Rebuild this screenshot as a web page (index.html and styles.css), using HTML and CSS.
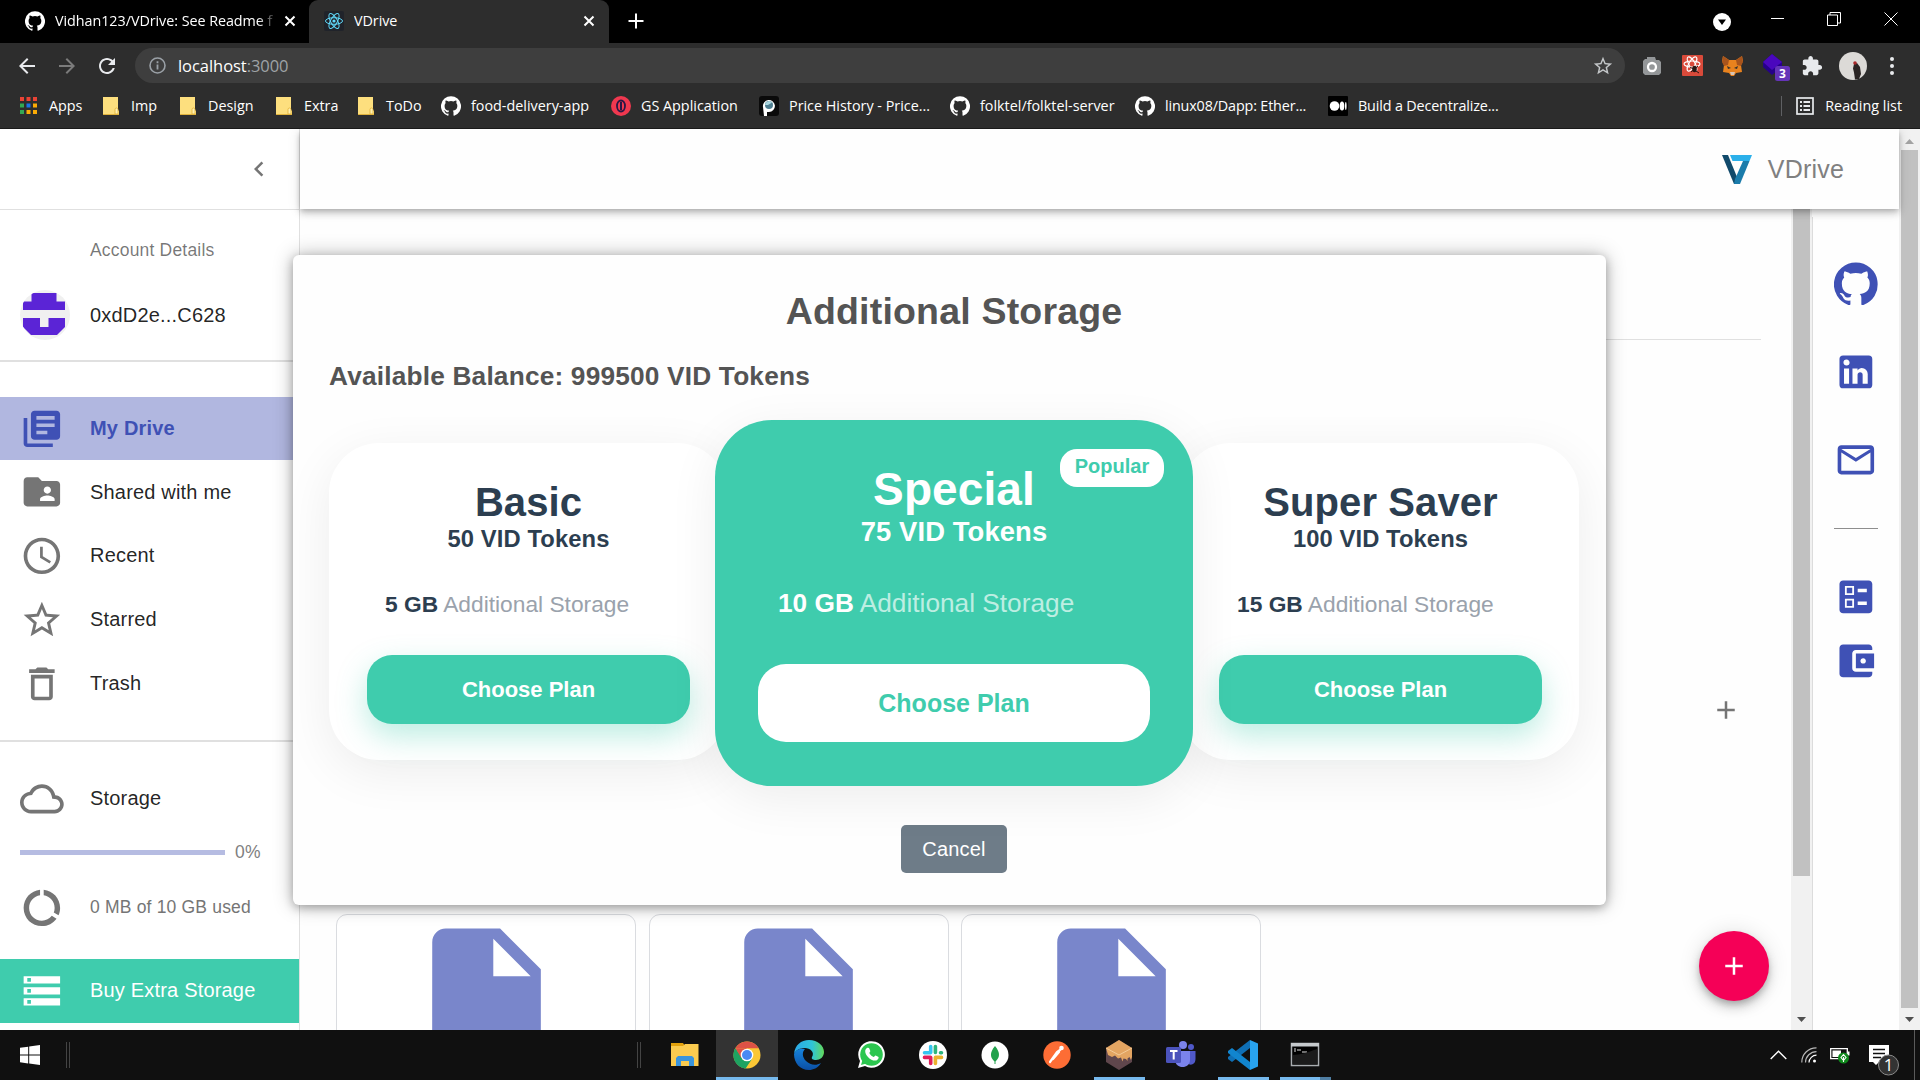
FILE: index.html
```html
<!DOCTYPE html>
<html lang="en">
<head>
<meta charset="utf-8">
<title>VDrive</title>
<link rel="stylesheet" href="styles.css">
</head>
<body>
<svg class="defs" width="0" height="0" aria-hidden="true">
  <symbol id="github" viewBox="0 0 24 24"><path d="M12 .3a12 12 0 0 0-3.8 23.4c.6.1.8-.3.8-.6v-2c-3.3.7-4-1.6-4-1.6-.6-1.4-1.4-1.8-1.4-1.8-1-.7.1-.7.1-.7 1.2 0 1.9 1.2 1.9 1.2 1 1.8 2.8 1.3 3.5 1 0-.8.4-1.3.7-1.6-2.7-.3-5.5-1.3-5.5-6 0-1.2.5-2.3 1.3-3.1-.2-.4-.6-1.6 0-3.2 0 0 1-.3 3.4 1.2a11.5 11.5 0 0 1 6 0c2.3-1.5 3.3-1.2 3.3-1.2.6 1.6.2 2.8 0 3.2.9.8 1.3 1.9 1.3 3.2 0 4.6-2.8 5.6-5.5 5.9.5.4.9 1 .9 2.2v3.3c0 .3.1.7.8.6A12 12 0 0 0 12 .3"/></symbol>
  <symbol id="folder" viewBox="0 0 16 18"><path d="M0 0h15v13l1 1v4H0z" fill="#fddf7e"/><path d="M12 17v-4.500a1.500 1.500 0 0 1 3 0V17z" fill="#fff0b0" stroke="#dfae35" stroke-width=".8"/><path d="M0 17.500h16" stroke="#e0b23c"/></symbol>
  <symbol id="close" viewBox="0 0 12 12"><path d="M1.500 1.500l9 9M10.500 1.500l-9 9" stroke="#fff" stroke-width="2" fill="none"/></symbol>
  <symbol id="add" viewBox="0 0 24 24"><path d="M19 13h-6v6h-2v-6H5v-2h6V5h2v6h6v2z"/></symbol>
  <symbol id="file" viewBox="0 0 24 24"><path d="M6 2c-1.100 0-1.990.9-1.990 2L4 20c0 1.100.89 2 1.990 2H18c1.100 0 2-.9 2-2V8l-6-6H6zm7 7V3.500L18.500 9H13z"/></symbol>
</svg>

<header class="browser">
  <div class="tabs">
    <div class="tab tab-first">
      <svg class="fav" fill="#fff"><use href="#github"/></svg>
      <span class="tab-title tab-fade">Vidhan123/VDrive: See Readme f</span>
      <svg class="tab-x"><use href="#close"/></svg>
    </div>
    <div class="tab tab-active">
      <svg class="fav" viewBox="0 0 20 20"><rect width="20" height="20" rx="2" fill="#20232a"/><g fill="none" stroke="#61dafb" stroke-width="1"><ellipse cx="10" cy="10" rx="8.500" ry="3.300"/><ellipse cx="10" cy="10" rx="8.500" ry="3.300" transform="rotate(60 10 10)"/><ellipse cx="10" cy="10" rx="8.500" ry="3.300" transform="rotate(120 10 10)"/></g><circle cx="10" cy="10" r="1.600" fill="#61dafb"/></svg>
      <span class="tab-title">VDrive</span>
      <svg class="tab-x"><use href="#close"/></svg>
    </div>
    <svg class="new-tab" viewBox="0 0 16 16"><path d="M8 .5v15M.5 8h15" stroke="#fff" stroke-width="2"/></svg>
    <div class="window-buttons">
      <svg width="18" height="18" viewBox="0 0 18 18"><circle cx="9" cy="9" r="9" fill="#fff"/><path d="M5 6.500h8L9 12z" fill="#000"/></svg>
      <svg width="14" height="14" viewBox="0 0 14 14" class="wb"><path d="M0 6.500h13"/></svg>
      <svg width="14" height="14" viewBox="0 0 14 14" class="wb"><path d="M.5 3h10v10.500H.5zM3 3V.5h10.500v10.500h-3"/></svg>
      <svg width="14" height="14" viewBox="0 0 14 14" class="wb"><path d="M.5.5l13 13M13.500.5l-13 13"/></svg>
    </div>
  </div>
  <div class="toolbar">
    <svg class="nav" viewBox="0 0 24 24" fill="#e8eaed"><path d="M20 11H7.830l5.590-5.590L12 4l-8 8 8 8 1.410-1.410L7.830 13H20v-2z"/></svg>
    <svg class="nav" viewBox="0 0 24 24" fill="#7b7b7b"><path d="M12 4l-1.410 1.410L16.170 11H4v2h12.170l-5.580 5.590L12 20l8-8z"/></svg>
    <svg class="nav" viewBox="0 0 24 24" fill="#e8eaed"><path d="M17.650 6.350C16.200 4.900 14.210 4 12 4c-4.420 0-7.990 3.580-7.990 8s3.570 8 7.990 8c3.730 0 6.840-2.550 7.730-6h-2.080c-.82 2.330-3.040 4-5.650 4-3.310 0-6-2.690-6-6s2.690-6 6-6c1.660 0 3.140.69 4.220 1.780L13 11h7V4l-2.350 2.350z"/></svg>
    <div class="omnibox">
      <svg width="17" height="17" viewBox="0 0 17 17"><circle cx="8.500" cy="8.500" r="7.500" fill="none" stroke="#9aa0a6" stroke-width="1.600"/><path d="M8.500 7.500v5M8.500 4.200v2" stroke="#9aa0a6" stroke-width="1.800"/></svg>
      <span class="url">localhost<span class="port">:3000</span></span>
      <svg class="star" width="22" height="22" viewBox="0 0 24 24" fill="#c4c7c9"><path d="M22 9.240l-7.190-.62L12 2 9.190 8.630 2 9.240l5.460 4.730L5.820 21 12 17.270 18.180 21l-1.630-7.030L22 9.240zM12 15.400l-3.760 2.270 1-4.280-3.320-2.880 4.380-.38L12 6.100l1.710 4.040 4.380.38-3.320 2.880 1 4.280L12 15.400z"/></svg>
    </div>
    <div class="extensions">
      <svg width="20" height="20" viewBox="0 0 20 20"><path d="M3 3h2V1h8l1 3h3l2 2v11l-2 2H3l-2-2V5z" fill="#949799"/><circle cx="10" cy="11" r="4" fill="none" stroke="#fff" stroke-width="2.300"/></svg>
      <svg width="21" height="21" viewBox="0 0 21 21"><rect width="21" height="21" rx="1" fill="#d94a3a"/><g fill="none" stroke="#fff" stroke-width="1.100"><ellipse cx="10" cy="9" rx="8" ry="3"/><ellipse cx="10" cy="9" rx="8" ry="3" transform="rotate(60 10 9)"/><ellipse cx="10" cy="9" rx="8" ry="3" transform="rotate(120 10 9)"/></g><ellipse cx="12.500" cy="14" rx="2.300" ry="3.300" fill="#261613"/><path d="M8 12l9 6M9 17l7-6" stroke="#261613" stroke-width="1"/></svg>
      <svg width="21" height="20" viewBox="0 0 21 20"><path d="M1 0l6 4h7l6-4 1 5-2 4 1 7-6 1-2 3H9l-2-3-6-1 1-7-2-4z" fill="#e8821e"/><path d="M1 0l6 4-1 5-4 1-2-4zM20 0l-6 4 1 5 4 1 2-4z" fill="#a8541c"/><path d="M8 16h5l-1 3H9z" fill="#d8c5b5"/><path d="M5 10l4 2-3 1zM16 10l-4 2 3 1z" fill="#34302f"/></svg>
      <svg width="30" height="28" viewBox="0 0 30 28"><path d="M2 8L11 0l10 8v5l-10 8-9-8z" fill="#26008a"/><path d="M2 8l9-8 10 8-10 8z" fill="#4a07bd"/><rect x="14" y="12" width="15" height="15" rx="2.500" fill="#6534b8"/><text x="21.500" y="24" class="ext-count">3</text></svg>
      <svg width="22" height="22" viewBox="0 0 24 24" fill="#e8eaed"><path d="M20.500 11H19V7c0-1.100-.9-2-2-2h-4V3.500C13 2.120 11.880 1 10.500 1S8 2.120 8 3.500V5H4c-1.100 0-1.990.9-1.990 2v3.800H3.500c1.490 0 2.700 1.210 2.700 2.700s-1.210 2.700-2.700 2.700H2V20c0 1.100.9 2 2 2h3.800v-1.500c0-1.490 1.210-2.700 2.700-2.700 1.490 0 2.700 1.210 2.700 2.700V22H17c1.100 0 2-.9 2-2v-4h1.500c1.380 0 2.500-1.120 2.500-2.500S21.880 11 20.500 11z"/></svg>
      <svg width="28" height="28" viewBox="0 0 28 28"><circle cx="14" cy="14" r="14" fill="#dcdad7"/><path d="M15 12l3-1 3 4 1 7-2 5-4 .5-1-7-1-4z" fill="#2a2423"/><circle cx="16" cy="11" r="1.800" fill="#a9282a"/></svg>
      <svg width="4" height="18" viewBox="0 0 4 18" fill="#e8eaed"><circle cx="2" cy="2" r="2"/><circle cx="2" cy="9" r="2"/><circle cx="2" cy="16" r="2"/></svg>
    </div>
  </div>
  <nav class="bookmarks">
    <a class="bm bm-folder"><svg width="17" height="17" viewBox="0 0 17 17"><path d="M0 0h4v4H0zM6.500 0h4v4h-4zM13 0h4v4h-4z" fill="#ea4335"/><path d="M0 6.500h4v4H0zM0 13h4v4H0z" fill="#34a853"/><path d="M6.500 6.500h4v4h-4z" fill="#1a73e8"/><path d="M13 6.500h4v4h-4zM6.500 13h4v4h-4zM13 13h4v4h-4z" fill="#fbab05"/></svg>Apps</a>
    <a class="bm bm-folder"><svg width="16" height="18"><use href="#folder"/></svg>Imp</a>
    <a class="bm bm-folder"><svg width="16" height="18"><use href="#folder"/></svg>Design</a>
    <a class="bm bm-folder"><svg width="16" height="18"><use href="#folder"/></svg>Extra</a>
    <a class="bm bm-folder"><svg width="16" height="18"><use href="#folder"/></svg>ToDo</a>
    <a class="bm"><svg width="20" height="20" fill="#fff"><use href="#github"/></svg>food-delivery-app</a>
    <a class="bm"><svg width="20" height="20" viewBox="0 0 20 20"><circle cx="10" cy="10" r="10" fill="#f0384f"/><ellipse cx="10" cy="10" rx="4" ry="5.500" fill="none" stroke="#2a1745" stroke-width="1.800"/><path d="M10 6v8" stroke="#2a1745" stroke-width="2"/></svg>GS Application</a>
    <a class="bm"><svg width="20" height="20" viewBox="0 0 20 20"><rect width="20" height="20" rx="3" fill="#0a0a0a"/><path d="M5 20l-1-9a6 6 0 1 1 6 5l-2 0 0 4z" fill="#fff"/><circle cx="10" cy="9" r="4" fill="#4e7e90"/><path d="M6 9a4 4 0 0 1 7-2.500L9 9z" fill="#a9d6df"/></svg>Price History - Price...</a>
    <a class="bm"><svg width="20" height="20" fill="#fff"><use href="#github"/></svg>folktel/folktel-server</a>
    <a class="bm bm-tight"><svg width="20" height="20" fill="#fff"><use href="#github"/></svg>linux08/Dapp: Ether...</a>
    <a class="bm bm-tight"><svg width="20" height="20" viewBox="0 0 20 20"><rect width="20" height="20" rx="1" fill="#000"/><g fill="#fff"><circle cx="6.500" cy="10" r="4.800"/><ellipse cx="14" cy="10" rx="2.300" ry="4.500"/><ellipse cx="17.800" cy="10" rx=".8" ry="4"/></g></svg>Build a Decentralize...</a>
    <a class="reading"><svg width="18" height="18" viewBox="0 0 18 18"><rect x="1" y="1" width="16" height="16" fill="none" stroke="#e8eaed" stroke-width="1.700"/><path d="M4 5h2M7.500 5H14M4 9h2M7.500 9H14M4 13h2M7.500 13H14" stroke="#e8eaed" stroke-width="1.800"/></svg>Reading list</a>
  </nav>
</header>

<main class="page">
  <aside class="drawer">
    <div class="drawer-head">
      <svg width="30" height="30" viewBox="0 0 24 24" fill="#757575"><path d="M15.410 7.410L14 6l-6 6 6 6 1.410-1.410L10.830 12z"/></svg>
    </div>
    <div class="account-label">Account Details</div>
    <div class="account">
      <svg class="avatar" viewBox="0 0 50 50"><defs><clipPath id="round"><circle cx="25" cy="25" r="25"/></clipPath></defs><g clip-path="url(#round)"><rect width="50" height="50" fill="#f0f0f0"/><path d="M11.500 3h25v8.500H45V20H3v-8.500h8.500zM3 28h17v9h8.500v-9H45v9l-8 8H11l-8-8z" fill="#5b24d6"/></g></svg>
      <span>0xdD2e...C628</span>
    </div>
    <div class="menu">
      <a class="item selected"><svg viewBox="0 0 24 24"><path d="M4 6H2v14c0 1.100.9 2 2 2h14v-2H4V6zm16-4H8c-1.100 0-2 .9-2 2v12c0 1.100.9 2 2 2h12c1.100 0 2-.9 2-2V4c0-1.100-.9-2-2-2zm-1 9H9V9h10v2zm-4 4H9v-2h6v2zm4-8H9V5h10v2z"/></svg>My Drive</a>
      <a class="item"><svg viewBox="0 0 24 24"><path d="M20 6h-8l-2-2H4c-1.100 0-1.990.9-1.990 2L2 18c0 1.100.9 2 2 2h16c1.100 0 2-.9 2-2V8c0-1.100-.9-2-2-2zm-5 3c1.100 0 2 .9 2 2s-.9 2-2 2-2-.9-2-2 .9-2 2-2zm4 8h-8v-1c0-1.330 2.670-2 4-2s4 .67 4 2v1z"/></svg>Shared with me</a>
      <a class="item"><svg viewBox="0 0 24 24"><path d="M11.990 2C6.470 2 2 6.480 2 12s4.470 10 9.990 10C17.520 22 22 17.520 22 12S17.520 2 11.990 2zM12 20c-4.420 0-8-3.580-8-8s3.580-8 8-8 8 3.580 8 8-3.580 8-8 8zm.5-13H11v6l5.250 3.150.75-1.230-4.500-2.670z"/></svg>Recent</a>
      <a class="item"><svg viewBox="0 0 24 24"><path d="M22 9.240l-7.190-.62L12 2 9.190 8.630 2 9.240l5.460 4.730L5.820 21 12 17.270 18.180 21l-1.630-7.030L22 9.240zM12 15.400l-3.760 2.270 1-4.280-3.320-2.880 4.380-.38L12 6.100l1.710 4.040 4.380.38-3.320 2.880 1 4.280L12 15.400z"/></svg>Starred</a>
      <a class="item"><svg viewBox="0 0 24 24"><path d="M6 19c0 1.100.9 2 2 2h8c1.100 0 2-.9 2-2V7H6v12zM8 9h8v10H8V9zm7.500-5l-1-1h-5l-1 1H5v2h14V4z"/></svg>Trash</a>
    </div>
    <div class="storage">
      <div class="item"><svg viewBox="0 0 24 24"><path d="M19.350 10.040C18.670 6.590 15.640 4 12 4 9.110 4 6.600 5.640 5.350 8.040 2.340 8.360 0 10.910 0 14c0 3.310 2.690 6 6 6h13c2.760 0 5-2.240 5-5 0-2.640-2.050-4.780-4.650-4.960zM19 18H6c-2.210 0-4-1.790-4-4 0-2.050 1.530-3.760 3.560-3.970l1.070-.11.5-.95C8.080 7.140 9.940 6 12 6c2.620 0 4.880 1.860 5.390 4.430l.3 1.500 1.530.11c1.560.1 2.780 1.410 2.780 2.960 0 1.650-1.350 3-3 3z"/></svg>Storage</div>
      <div class="progress"><div class="bar"></div><span>0%</span></div>
      <div class="item used"><svg viewBox="0 0 24 24"><path d="M13 2.050v3.030c3.390.49 6 3.390 6 6.920 0 .9-.18 1.750-.48 2.540l2.600 1.530c.56-1.240.88-2.620.88-4.070 0-5.180-3.950-9.450-9-9.950zM12 19c-3.870 0-7-3.130-7-7 0-3.530 2.610-6.430 6-6.920V2.050c-5.060.5-9 4.760-9 9.950 0 5.520 4.470 10 9.990 10 3.310 0 6.240-1.610 8.060-4.090l-2.600-1.530C16.170 17.980 14.210 19 12 19z"/></svg>0 MB of 10 GB used</div>
      <a class="item buy"><svg viewBox="0 0 24 24"><path d="M2 20h20v-4H2v4zm2-3h2v2H4v-2zM2 4v4h20V4H2zm4 3H4V5h2v2zm-4 7h20v-4H2v4zm2-3h2v2H4v-2z"/></svg>Buy Extra Storage</a>
    </div>
  </aside>

  <section class="main">
    <div class="appbar">
      <svg width="30" height="29" viewBox="0 0 30 29"><path d="M0 0h6l9 22v7h-3z" fill="#114a6b"/><path d="M8 0h22l-2.500 6H10.500z" fill="#2bb0ea"/><path d="M27.500 6h-6.500L13 24l-1 5h6z" fill="#1b7cab"/></svg>
      <span>VDrive</span>
    </div>
    <div class="below">
      <div class="content">
        <hr class="rule">
        <div class="upload"><svg width="30" height="30" fill="#757575"><use href="#add"/></svg></div>
        <div class="files">
          <div class="file"><svg><use href="#file"/></svg></div>
          <div class="file"><svg><use href="#file"/></svg></div>
          <div class="file"><svg><use href="#file"/></svg></div>
        </div>
      </div>
      <div class="scroll scroll-inner"><div class="thumb"></div><svg width="9" height="5" viewBox="0 0 9 5"><path d="M0 0h9L4.500 5z" fill="#505050"/></svg></div>
      <div class="rail">
        <svg viewBox="0 0 24 24"><use href="#github"/></svg>
        <svg viewBox="0 0 24 24"><path d="M19 3a2 2 0 0 1 2 2v14a2 2 0 0 1-2 2H5a2 2 0 0 1-2-2V5a2 2 0 0 1 2-2h14m-.5 15.500v-5.300a3.260 3.260 0 0 0-3.260-3.260c-.85 0-1.840.52-2.320 1.300v-1.110h-2.790v8.370h2.790v-4.930c0-.77.62-1.400 1.390-1.400a1.400 1.400 0 0 1 1.400 1.400v4.930h2.790M6.880 8.560a1.680 1.680 0 0 0 1.680-1.680c0-.93-.75-1.690-1.680-1.690a1.690 1.690 0 0 0-1.690 1.690c0 .93.76 1.680 1.690 1.680m1.390 9.940v-8.370H5.500v8.370h2.770z"/></svg>
        <svg viewBox="0 0 24 24"><path d="M20 4H4c-1.100 0-1.990.9-1.990 2L2 18c0 1.100.9 2 2 2h16c1.100 0 2-.9 2-2V6c0-1.100-.9-2-2-2zm0 14H4V8l8 5 8-5v10zm-8-7L4 6h16l-8 5z"/></svg>
        <hr>
        <svg viewBox="0 0 24 24"><path fill-rule="evenodd" d="M13 9.500h5v-2h-5v2zm0 7h5v-2h-5v2zm6 4.500H5c-1.100 0-2-.9-2-2V5c0-1.100.9-2 2-2h14c1.100 0 2 .9 2 2v14c0 1.100-.9 2-2 2zM6 11h5V6H6v5zm1-4h3v3H7V7zM6 18h5v-5H6v5zm1-4h3v3H7v-3z"/></svg>
        <svg class="wallet" viewBox="0 0 24 24"><path d="M21 18v1c0 1.100-.9 2-2 2H5c-1.110 0-2-.9-2-2V5c0-1.100.89-2 2-2h14c1.100 0 2 .9 2 2v1h-9c-1.110 0-2 .9-2 2v8c0 1.100.89 2 2 2h9zm-9-2h10V8H12v8zm4-2.500c-.83 0-1.500-.67-1.500-1.500s.67-1.500 1.500-1.500 1.500.67 1.500 1.500-.67 1.500-1.500 1.500z"/></svg>
      </div>
    </div>
  </section>

  <div class="scroll scroll-outer"><svg width="9" height="5" viewBox="0 0 9 5"><path d="M0 5h9L4.500 0z" fill="#a3a3a3"/></svg><div class="thumb"></div><svg width="9" height="5" viewBox="0 0 9 5"><path d="M0 0h9L4.500 5z" fill="#505050"/></svg></div>

  <button class="fab"><svg width="30" height="30" fill="#fff"><use href="#add"/></svg></button>

  <div class="modal">
    <h1>Additional Storage</h1>
    <h2>Available Balance: 999500 VID Tokens</h2>
    <div class="plans">
      <div class="plan">
        <h3>Basic</h3>
        <h4>50 VID Tokens</h4>
        <p><b>5 GB</b> Additional Storage</p>
        <button>Choose Plan</button>
      </div>
      <div class="plan special">
        <span class="popular">Popular</span>
        <h3>Special</h3>
        <h4>75 VID Tokens</h4>
        <p><b>10 GB</b> Additional Storage</p>
        <button>Choose Plan</button>
      </div>
      <div class="plan">
        <h3>Super Saver</h3>
        <h4>100 VID Tokens</h4>
        <p><b>15 GB</b> Additional Storage</p>
        <button>Choose Plan</button>
      </div>
    </div>
    <button class="cancel">Cancel</button>
  </div>
</main>

<footer class="taskbar">
  <div class="start">
    <svg width="20" height="20" viewBox="0 0 20 20" fill="#fff"><path d="M0 2.800L8.200 1.700v7.800H0zM9.200 1.500L20 0v9.500H9.200zM0 10.500h8.200v7.900L0 17.300zM9.200 10.500H20V20L9.200 18.500z"/></svg>
  </div>
  <i class="grip"></i>
  <i class="grip grip-apps"></i>
  <div class="apps">
    <div class="app"><svg viewBox="0 0 30 30"><path d="M1 3h12l2 3H1z" fill="#e2a10c"/><path d="M1 6h12l2-2h13.500v22H1z" fill="#fbcb4f"/><path d="M6 26v-8l2-2h14l2 2v8h-5v-5h-8v5z" fill="#3a94dc"/></svg></div>
    <div class="app app-active"><svg viewBox="0 0 30 30"><circle cx="15" cy="15" r="13.500" fill="#fbc735"/><path d="M3.300 8.300A13.500 13.500 0 0 1 26.700 8.300H15z" fill="#dd5246"/><path d="M3.300 8.300A13.500 13.500 0 0 0 13.500 28.400l6.500-9.500-8 1z" fill="#1ea362"/><path d="M3.300 8.300l5.900 10L15 8.300z" fill="#dd5246"/><path d="M3.300 8.300L9.300 18.500l8 2-3.800 8A13.500 13.500 0 0 1 3.300 8.300z" fill="#1ea362"/><circle cx="15" cy="15" r="6.300" fill="#fff"/><circle cx="15" cy="15" r="5" fill="#4a8af4"/></svg></div>
    <div class="app"><svg viewBox="0 0 30 30"><defs><linearGradient id="edge-a" x1="0" x2="1"><stop offset="0" stop-color="#2aa7e8"/><stop offset=".6" stop-color="#2fc4d8"/><stop offset="1" stop-color="#63d95a"/></linearGradient><linearGradient id="edge-b" x1="0" y1="0" x2="0" y2="1"><stop offset="0" stop-color="#1683dc"/><stop offset="1" stop-color="#0b4fa5"/></linearGradient></defs><path d="M0 14C1 5 7 0 15 0c9 0 15 6 15 12 0 5-4 8-8 8-3 0-5-1-4-3 3-5-2-9-7-9-5 0-9 2-11 6z" fill="url(#edge-a)"/><path d="M0 14c2-5 7-6 11-5-3 3-3 8 1 12 4 4 10 5 15 2-3 5-8 7-12 7C6 30 0 23 0 14z" fill="url(#edge-b)"/></svg></div>
    <div class="app"><svg viewBox="0 0 30 30"><path d="M2 28l2-7a13.300 13.300 0 1 1 5 5z" fill="#fff"/><circle cx="15.500" cy="14.500" r="11.300" fill="#2cc64f"/><path d="M5 25l1.500-5 4 3.500z" fill="#2cc64f"/><path d="M11 8c1-.6 2-.3 2.300.5l1 2.400c.2.700-1.200 1.600-1 2.100 1 2 2.400 3.200 4.300 4 .6.2 1.400-1.600 2-1.400l2.500 1.200c1.400.8-.4 3.200-1.600 3.600-5.200 1.300-11.600-5.200-11.300-9.500.1-1.300.9-2.400 1.800-2.900z" fill="#fff"/></svg></div>
    <div class="app"><svg viewBox="0 0 30 30"><circle cx="15" cy="15" r="14" fill="#fff"/><g stroke-width="3.600" stroke-linecap="round" fill="none"><path d="M12.700 6.500v6M6.500 12.700h6" stroke="#36c5f0"/><path d="M17.400 6.500v6M23.500 12.700h-1" stroke="#2eb67d"/><path d="M17.400 17.500v6M17.500 17.400h6" stroke="#ecb22e"/><path d="M12.700 17.500v6M6.500 17.400h6" stroke="#e01e5a"/></g></svg></div>
    <div class="app"><svg viewBox="0 0 30 30"><circle cx="15" cy="15" r="13.500" fill="#fff"/><path d="M15 6c6 7 4.500 12 .5 15.500V24h-1v-2.500C10.500 18 9 13 15 6z" fill="#21a14c"/></svg></div>
    <div class="app"><svg viewBox="0 0 30 30"><circle cx="15" cy="15" r="13.700" fill="#fd6d35"/><path d="M8 22l7-10 3-2M11 19l6-7" stroke="#fff" stroke-width="2.200" stroke-linecap="round"/><circle cx="19.500" cy="8" r="2.300" fill="#fff"/></svg></div>
    <div class="app app-open"><svg viewBox="0 0 30 30"><path d="M2 8l13-8 13 8v14l-13 8-13-8z" fill="#5f464c"/><path d="M2 8l13-8 13 8v9l-1 3-1.500-3-2 1.500v2.500l-1.500-2-2.500-.5-1 3-1.500-4-3 1-3-3-3 1.500-4-2z" fill="#e3a562"/><path d="M2 8l13 7 13-7" stroke="#f3cb98" fill="none"/></svg></div>
    <div class="app"><svg viewBox="0 0 30 30"><circle cx="17" cy="5" r="4" fill="#7b83eb"/><circle cx="25" cy="7" r="3" fill="#5059c9"/><path d="M20 11h9.500v8c0 6-6 7-8 4z" fill="#5059c9"/><path d="M9 11h15v9c0 9-13 9-14.500 2z" fill="#7b83eb"/><rect x="0" y="7" width="15" height="16" rx="1.500" fill="#4b53bc"/><path d="M4 11h7.500M7.700 11v8.500" stroke="#fff" stroke-width="2"/></svg></div>
    <div class="app app-open"><svg viewBox="0 0 30 30"><path d="M22 0l8 3.500v23L22 30z" fill="#28a3f0"/><path d="M22 0v8L4 22l-4-3v-2z" fill="#0f6fb5"/><path d="M22 30v-8L4 8l-4 3v2z" fill="#1185cf"/></svg></div>
    <div class="app app-open app-multi"><svg viewBox="0 0 30 30"><path d="M1.500 3.500h27v22h-27z" fill="#000" stroke="#a9adb0" stroke-width="1.500"/><path d="M1 3h28v3.500H1z" fill="#c5c9cc"/><path d="M4 9h2M4 11h2M8 9v2M10 9v2M12 12h5" stroke="#ddd" stroke-width="1"/><path d="M3 24V15c6 0 16-3 24-6v15z" fill="#1b1b1b"/></svg></div>
  </div>
  <div class="tray">
    <svg width="17" height="10" viewBox="0 0 17 10"><path d="M.7 9L8.500 1.200 16.300 9" fill="none" stroke="#fff" stroke-width="1.400"/></svg>
    <svg width="16" height="16" viewBox="0 0 16 16" fill="none" stroke="#fff" stroke-width="1.200"><path d="M.8 15.500A14.500 14.500 0 0 1 15.500.8M4.500 15.500A11 11 0 0 1 15.500 4.600" opacity=".7"/><path d="M8 15.500a7.500 7.500 0 0 1 7.500-7.300"/><circle cx="13.500" cy="14" r="1.500" fill="#fff" stroke="none"/></svg>
    <svg width="20" height="18" viewBox="0 0 20 18"><path d="M.7 2.700h16.600v10H.7z" fill="none" stroke="#fff" stroke-width="1.300"/><path d="M2.500 4.500H11v6.500H2.500zM18 5.500h1.500v4H18z" fill="#fff"/><circle cx="13.500" cy="12" r="5.500" fill="#0f8a1c"/><path d="M13.500 8.500l2.500 3-2.500 3-2.500-3zM13.500 11v5" fill="none" stroke="#fff" stroke-width="1.100"/></svg>
    <svg width="31" height="31" viewBox="0 0 31 31"><path d="M0 0h20v17H10l-3 3-3-3H0z" fill="#fff"/><path d="M4 4.500h12M4 8.500h12M4 12.500h8" stroke="#101010" stroke-width="1.300"/><circle cx="19.500" cy="20" r="10" fill="#333" stroke="#8a8a8a"/><text x="19.500" y="25.500" class="note-count">1</text></svg>
  </div>
</footer>
</body>
</html>
```

FILE: styles.css
```css
* { box-sizing: border-box; }
html, body { margin: 0; height: 100%; }
body {
  width: 1920px;
  height: 1080px;
  display: flex;
  flex-direction: column;
  overflow: hidden;
  font-family: "Liberation Sans", Arial, sans-serif;
  font-size: 20px;
  letter-spacing: 0.1875px;
  color: rgba(0, 0, 0, 0.87);
}
.defs { position: absolute; }
svg { display: block; flex: none; }
button { border: 0; padding: 0; font-family: inherit; letter-spacing: inherit; }

/* Browser window */
.browser {
  flex: none;
  height: 129px;
  background: #2d2d2d;
  border-bottom: 1px solid #1a1a1a;
  font-family: "Open Sans", "Noto Sans", sans-serif;
  font-size: 14.35px;
  letter-spacing: 0;
  color: #fff;
}
.tabs { height: 43px; background: #000; display: flex; align-items: stretch; }
.tab { display: flex; align-items: center; gap: 10px; }
.tab-first { width: 309px; padding: 0 13px 2px 25px; }
.tab-active { width: 300px; padding: 0 14px 2px 15px; background: #2d2d2d; border-radius: 9px 9px 0 0; }
.fav { width: 20px; height: 20px; }
.tab-title { flex: 1; white-space: nowrap; overflow: hidden; letter-spacing: -0.05px; }
.tab-fade { -webkit-mask-image: linear-gradient(90deg, #000 203px, transparent 222px); mask-image: linear-gradient(90deg, #000 203px, transparent 222px); }
.tab-x { width: 12px; height: 12px; }
.new-tab { width: 16px; height: 16px; margin: 13px 0 0 19px; }
.window-buttons { margin-left: auto; display: flex; align-items: flex-start; padding: 12px 22px 0 0; }
.window-buttons svg:first-child { margin-top: 1px; }
.window-buttons svg:nth-child(2) { margin-left: 40px; }
.window-buttons svg:nth-child(3) { margin-left: 42px; }
.window-buttons svg:nth-child(4) { margin-left: 43px; }
.wb { fill: none; stroke: #fff; stroke-width: 1; }

.toolbar { height: 45px; padding: 5px 26px 5px 15px; display: flex; align-items: center; }
.nav { width: 24px; height: 24px; margin-right: 16px; }
.omnibox { width: 1490px; height: 35px; padding: 0 11px 0 14px; border-radius: 18px; background: #3e3e3e; display: flex; align-items: center; gap: 12px; }
.url { flex: 1; font-size: 16.5px; letter-spacing: -0.05px; padding-bottom: 1px; }
.port { color: #9fa3a6; }
.extensions { flex: none; display: flex; align-items: center; }
.extensions svg:nth-child(1) { margin-left: 17px; }
.extensions svg:nth-child(2) { margin-left: 20px; }
.extensions svg:nth-child(3) { margin-left: 19px; }
.extensions svg:nth-child(4) { margin: 4px 0 0 18px; }
.extensions svg:nth-child(5) { margin-left: 10px; }
.extensions svg:nth-child(6) { margin-left: 16px; }
.extensions svg:nth-child(7) { margin-left: 23px; }
.ext-count { fill: #fff; font-size: 12px; font-weight: 700; text-anchor: middle; }

.bookmarks { height: 40px; padding: 0 18px 5px 20px; display: grid; grid-template-columns: 83px 77px 96px 82px 83px 170px 148px 191px 185px 193px 1fr auto; align-items: center; }
.bm, .reading { display: flex; align-items: center; gap: 10px; white-space: nowrap; }
.bm-folder { gap: 12px; }
.bm-tight { letter-spacing: -0.15px; }
.reading { gap: 11px; padding-left: 14px; border-left: 1px solid #5f6063; height: 20px; }

/* Page */
.page { flex: none; height: 901px; display: flex; position: relative; overflow: hidden; background: #fefefe; }
.drawer { flex: none; width: 300px; border-right: 1px solid #e0e0e0; background: #fff; display: flex; flex-direction: column; }
.drawer-head { height: 81px; border-bottom: 1px solid #e0e0e0; display: flex; align-items: center; justify-content: flex-end; padding-right: 25px; }
.account-label { padding: 22px 0 0 90px; height: 60px; line-height: 36px; font-size: 17.5px; color: rgba(0, 0, 0, 0.54); }
.account { height: 92px; padding: 0 20px; display: flex; align-items: center; gap: 20px; border-bottom: 2px solid #e0e0e0; }
.avatar { width: 50px; height: 50px; }
.menu { height: 380px; padding-top: 34.500px; border-bottom: 2px solid #e0e0e0; }
.item { height: 63.75px; padding-left: 20px; display: flex; align-items: center; gap: 26.25px; }
.item svg { width: 43.75px; height: 43.75px; fill: #757575; }
.selected { background: #b1b7e0; color: #3f51b5; font-weight: 700; }
.selected svg { fill: #3f51b5; }
.storage { padding-top: 25px; }
.progress { height: 44px; padding: 0 38px 0 20px; display: flex; align-items: center; gap: 10px; font-size: 17.5px; color: #808080; }
.bar { width: 205px; height: 5px; background: #b6bce2; }
.used { height: 66px; font-size: 17.5px; color: #757575; }
.buy { height: 64px; margin-top: 18px; background: #3fccad; color: #fff; }
.buy svg { fill: #fff; }

.main { flex: none; width: 1599px; display: flex; flex-direction: column; }
.appbar {
  flex: none;
  height: 80px;
  padding-right: 55px;
  display: flex;
  align-items: center;
  justify-content: flex-end;
  gap: 16px;
  font-size: 25px;
  color: #808080;
  background: #fefefe;
  position: relative;
  box-shadow: 0 2.5px 5px -1.25px rgba(0, 0, 0, 0.2), 0 5px 6.25px rgba(0, 0, 0, 0.14), 0 1.25px 12.5px rgba(0, 0, 0, 0.12);
}
.below { flex: 1; display: flex; min-height: 0; }
.content { width: 1491px; padding: 130px 30px 0 36px; overflow: hidden; }
.rule { margin: 0; border: 0; height: 1px; background: #e0e0e0; }
.upload { height: 574px; display: flex; justify-content: flex-end; padding: 355px 20px 0 0; }
.files { display: flex; gap: 12.5px; }
.file { flex: none; width: 300px; height: 260px; border: 1px solid #dadce0; border-radius: 11px; display: flex; justify-content: center; background: #fff; }
.file svg { width: 163px; height: 163px; fill: #7986cb; }
.scroll { display: flex; flex-direction: column; align-items: center; background: #f1f1f1; width: 21px; }
.thumb { width: 17px; background: #c1c1c1; }
.scroll-inner .thumb { height: 667px; margin-bottom: 141px; }
.scroll-outer { padding-top: 10px; }
.scroll-outer .thumb { height: 858px; margin: 6px 0 9px; }
.rail { width: 87px; margin-top: 8px; border-left: 1px solid #dcdcdc; padding-top: 44.500px; display: flex; flex-direction: column; align-items: center; gap: 44.500px; }
.rail svg { width: 43.75px; height: 43.75px; fill: #3f51b5; }
.rail hr { width: 44px; height: 1px; margin: 2px 0 1.500px; border: 0; background: #8e8e8e; }
.rail .wallet { margin-top: -24.250px; }

.fab {
  position: absolute;
  left: 1699px;
  top: 802px;
  width: 70px;
  height: 70px;
  border-radius: 50%;
  background: #f50057;
  display: flex;
  align-items: center;
  justify-content: center;
  box-shadow: 0 4px 6px -1px rgba(0, 0, 0, 0.2), 0 7px 12px rgba(0, 0, 0, 0.14), 0 1px 22px rgba(0, 0, 0, 0.12);
}

/* Plan dialog */
.modal {
  position: absolute;
  left: 293px;
  top: 126px;
  width: 1313px;
  height: 650px;
  padding: 31px 27px 0 36px;
  border-radius: 6px;
  background: #fefefe;
  box-shadow: 0 3px 10px rgba(0, 0, 0, 0.25), 0 0 20px rgba(0, 0, 0, 0.28);
  display: flex;
  flex-direction: column;
}
.modal h1, .modal h2, .modal h3, .modal h4, .modal p { margin: 0; }
.modal h1 { font-size: 37.5px; line-height: 50px; letter-spacing: 0.1875px; text-align: center; color: #545454; }
.modal h2 { margin-top: 20px; font-size: 26.25px; line-height: 40px; letter-spacing: 0.1875px; color: #545454; }
.plans { margin-top: 24px; display: flex; align-items: center; height: 366px; }
.plan {
  flex: none;
  width: 398px;
  height: 317px;
  margin-bottom: 3px;
  padding: 39px 37px 0 38px;
  border-radius: 50px;
  background: #fff;
  color: #2c3e50;
  text-align: center;
  box-shadow: 0 12px 50px rgba(0, 0, 0, 0.07);
}
.plan h3 { font-size: 40px; line-height: 40px; letter-spacing: 0.1px; }
.plan h4 { margin-top: 4px; font-size: 23.75px; line-height: 26px; letter-spacing: 0.1px; }
.plan p { margin-top: 37px; padding-left: 18px; font-size: 22.75px; line-height: 30px; letter-spacing: 0; text-align: left; color: #9aa2ac; }
.plan b { color: #2c3e50; }
.plan button {
  display: block;
  width: 323px;
  height: 69px;
  margin-top: 36px;
  border-radius: 25px;
  background: #3fccad;
  color: #fff;
  font-size: 22px;
  font-weight: 700;
  letter-spacing: 0;
  box-shadow: 0 12px 30px rgba(63, 204, 173, 0.35);
}
.plan.special {
  position: relative;
  z-index: 1;
  width: 478px;
  height: 366px;
  margin: 0 -12px;
  padding: 46px 43px 0;
  border-radius: 57px;
  background: #3fccad;
  color: #fff;
}
.special h3 { font-size: 46px; line-height: 46px; }
.special h4 { margin-top: 5px; font-size: 27.4px; line-height: 30px; }
.special p { margin-top: 39px; padding-left: 20px; font-size: 26.250px; line-height: 34px; color: #bdeee2; }
.special b { color: #fff; }
.special button { width: 392px; height: 78px; margin-top: 44px; border-radius: 28px; background: #fff; color: #3fccad; font-size: 25px; box-shadow: none; }
.popular { position: absolute; top: 29px; right: 29px; width: 104px; height: 38px; border-radius: 17px; background: #fff; color: #3fccad; font-size: 20px; font-weight: 700; line-height: 34px; letter-spacing: 0; }
.cancel { align-self: center; width: 106px; height: 48px; margin-top: 39px; border-radius: 5px; background: #6e7c88; color: #fff; font-size: 20px; }

/* Taskbar */
.taskbar { flex: none; height: 50px; background: #101010; display: flex; align-items: center; letter-spacing: 0; }
.start { width: 66px; padding-left: 20px; }
.grip { width: 4px; height: 26px; border: solid #444; border-width: 0 1px; }
.grip-apps { margin-left: 567px; }
.apps { display: flex; height: 50px; margin-left: 13px; }
.app { width: 62px; display: flex; align-items: center; justify-content: center; border-bottom: 3px solid transparent; padding-top: 3px; }
.app svg { width: 30px; height: 30px; }
.app-active { background: #333; border-bottom-color: #76b9ed; }
.app-open { background: linear-gradient(#76b9ed, #76b9ed) 50% 100% / 51px 3px no-repeat border-box; }
.app-multi { background: linear-gradient(90deg, #76b9ed 40px, #4f7ea3 40px) 50% 100% / 51px 3px no-repeat border-box; }
.tray { height: 50px; margin-left: auto; margin-right: 5px; padding-right: 14px; border-right: 1px solid #5a5a5a; display: flex; align-items: center; }
.tray svg:nth-child(2) { margin-left: 14px; }
.tray svg:nth-child(3) { margin-left: 13px; }
.tray svg:nth-child(4) { margin: 11px 0 0 19px; }
.note-count { fill: #fff; font-size: 17px; text-anchor: middle; font-family: "Open Sans", sans-serif; }
```
